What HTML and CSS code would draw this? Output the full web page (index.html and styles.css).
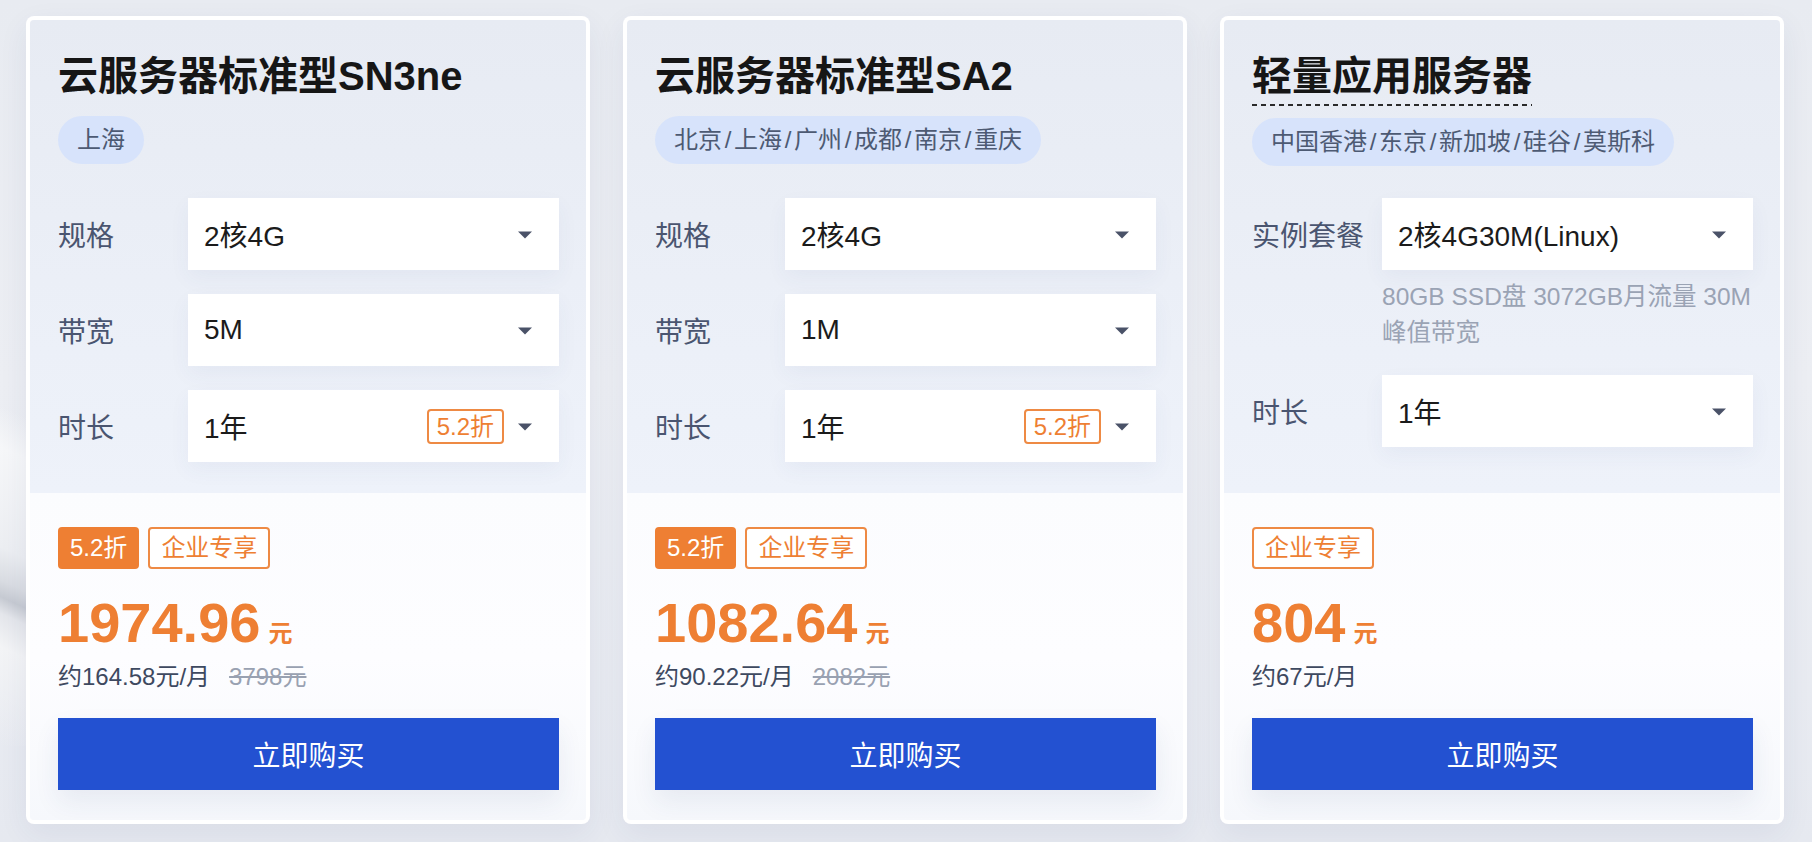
FILE: index.html
```html
<!DOCTYPE html>
<html lang="zh-CN">
<head>
<meta charset="utf-8">
<title>云服务器</title>
<link rel="stylesheet" href="styles.css">
</head>
<body>
<div class="cards">
  <div class="card">
    <div class="card-top">
      <h2 class="title">云服务器标准型SN3ne</h2>
      <div><span class="pill">上海</span></div>
      <div class="rows">
        <div class="row">
          <div class="label">规格</div>
          <div class="select"><span class="val">2核4G</span><svg class="arrow" width="14" height="8" viewBox="0 0 14 8"><path d="M0 0.5H14L7 7.5Z"/></svg></div>
        </div>
        <div class="row">
          <div class="label">带宽</div>
          <div class="select"><span class="val">5M</span><svg class="arrow" width="14" height="8" viewBox="0 0 14 8"><path d="M0 0.5H14L7 7.5Z"/></svg></div>
        </div>
        <div class="row">
          <div class="label">时长</div>
          <div class="select"><span class="val">1年</span><span class="sel-tag">5.2折</span><svg class="arrow" width="14" height="8" viewBox="0 0 14 8"><path d="M0 0.5H14L7 7.5Z"/></svg></div>
        </div>
      </div>
    </div>
    <div class="card-bottom">
      <div class="badges"><span class="badge fill">5.2折</span><span class="badge line">企业专享</span></div>
      <div class="price"><span class="num">1974.96</span><span class="unit">元</span></div>
      <div class="sub">约164.58元/月<span class="orig">3798元</span></div>
      <button class="buy">立即购买</button>
    </div>
  </div>

  <div class="card">
    <div class="card-top">
      <h2 class="title">云服务器标准型SA2</h2>
      <div><span class="pill">北京<span class="sep">/</span>上海<span class="sep">/</span>广州<span class="sep">/</span>成都<span class="sep">/</span>南京<span class="sep">/</span>重庆</span></div>
      <div class="rows">
        <div class="row">
          <div class="label">规格</div>
          <div class="select"><span class="val">2核4G</span><svg class="arrow" width="14" height="8" viewBox="0 0 14 8"><path d="M0 0.5H14L7 7.5Z"/></svg></div>
        </div>
        <div class="row">
          <div class="label">带宽</div>
          <div class="select"><span class="val">1M</span><svg class="arrow" width="14" height="8" viewBox="0 0 14 8"><path d="M0 0.5H14L7 7.5Z"/></svg></div>
        </div>
        <div class="row">
          <div class="label">时长</div>
          <div class="select"><span class="val">1年</span><span class="sel-tag">5.2折</span><svg class="arrow" width="14" height="8" viewBox="0 0 14 8"><path d="M0 0.5H14L7 7.5Z"/></svg></div>
        </div>
      </div>
    </div>
    <div class="card-bottom">
      <div class="badges"><span class="badge fill">5.2折</span><span class="badge line">企业专享</span></div>
      <div class="price"><span class="num">1082.64</span><span class="unit">元</span></div>
      <div class="sub">约90.22元/月<span class="orig">2082元</span></div>
      <button class="buy">立即购买</button>
    </div>
  </div>

  <div class="card">
    <div class="card-top lite">
      <h2 class="title dashed">轻量应用服务器</h2>
      <div><span class="pill">中国香港<span class="sep">/</span>东京<span class="sep">/</span>新加坡<span class="sep">/</span>硅谷<span class="sep">/</span>莫斯科</span></div>
      <div class="rows">
        <div class="row">
          <div class="label">实例套餐</div>
          <div class="select"><span class="val">2核4G30M(Linux)</span><svg class="arrow" width="14" height="8" viewBox="0 0 14 8"><path d="M0 0.5H14L7 7.5Z"/></svg></div>
          <div class="desc">80GB SSD盘 3072GB月流量 30M 峰值带宽</div>
        </div>
        <div class="row">
          <div class="label">时长</div>
          <div class="select"><span class="val">1年</span><svg class="arrow" width="14" height="8" viewBox="0 0 14 8"><path d="M0 0.5H14L7 7.5Z"/></svg></div>
        </div>
      </div>
    </div>
    <div class="card-bottom">
      <div class="badges"><span class="badge line">企业专享</span></div>
      <div class="price"><span class="num">804</span><span class="unit">元</span></div>
      <div class="sub">约67元/月</div>
      <button class="buy">立即购买</button>
    </div>
  </div>
</div>
</body>
</html>
```

FILE: styles.css
```css
* { box-sizing: border-box; }

html, body { height: 100%; }

body {
  margin: 0;
  padding: 16px 19px 0 26px;
  font-family: "Liberation Sans", "Noto Sans CJK SC", sans-serif;
  color: #1a1a1a;
  background: linear-gradient(180deg, #e8ebf1 0%, #eceef3 45%, #e6e9f0 100%);
  overflow: hidden;
}

.cards {
  display: grid;
  grid-template-columns: repeat(3, 564px);
  column-gap: 33px;
  position: relative;
}

.cards::before {
  content: "";
  position: absolute;
  left: -26px;
  top: 330px;
  width: 34px;
  height: 400px;
  background:
    linear-gradient(205deg, rgba(255,255,255,0) 0 18%, #f6f7f9 28%, #eceef2 52%, #d9dce2 60%, #c6cad2 64%, #e4e6eb 68%, #f3f4f6 76%, rgba(236,238,243,0) 100%);
  border-radius: 0 34px 0 0;
  z-index: 0;
}

.card {
  position: relative;
  z-index: 1;
  display: flex;
  flex-direction: column;
  border: 4px solid rgba(255,255,255,0.95);
  border-radius: 8px;
  background: #fbfcfe;
  box-shadow: 0 10px 30px rgba(40, 60, 110, 0.07);
  overflow: hidden;
}

.card-top {
  flex: 1;
  padding: 28px 27px 31px 28px;
  background: linear-gradient(180deg, #e7ebf3 0%, #ebeff7 55%, #eef2fa 100%);
}

.title {
  margin: 0;
  font-size: 40px;
  line-height: 56px;
  font-weight: 700;
  color: #161616;
}

.title.dashed {
  display: inline-block;
  background-image: repeating-linear-gradient(90deg, #2a2a2a 0 5px, rgba(0,0,0,0) 5px 9px);
  background-size: 100% 2px;
  background-repeat: no-repeat;
  background-position: 0 100%;
  padding-bottom: 2px;
}

.pill {
  display: inline-block;
  margin-top: 12px;
  height: 48px;
  line-height: 48px;
  padding: 0 19px;
  border-radius: 24px;
  background: #d7e3fb;
  color: #4d5a73;
  font-size: 24px;
  white-space: nowrap;
}

.sep {
  display: inline-block;
  width: 12px;
  text-align: center;
}

.rows {
  margin-top: 34px;
  display: flex;
  flex-direction: column;
  gap: 24px;
}

.lite .rows { margin-top: 32px; }

.row {
  display: grid;
  grid-template-columns: 130px 1fr;
  align-items: center;
}

.label {
  font-size: 28px;
  color: #4a5570;
  white-space: nowrap;
}

.select {
  height: 72px;
  background: #fff;
  display: flex;
  align-items: center;
  padding: 0 27px 0 16px;
  font-size: 28px;
  color: #1b1b1b;
  box-shadow: 0 8px 20px rgba(50, 70, 130, 0.05);
}

.val { flex: 1; }

.sel-tag {
  height: 35px;
  line-height: 31px;
  padding: 0 8px;
  border: 2px solid #ee8a44;
  border-radius: 4px;
  font-size: 24px;
  color: #ee7f33;
  margin-right: 14px;
}

.arrow { fill: #4a5268; display: block; margin-top: 2px; }

.desc {
  grid-column: 2;
  margin-top: 9px;
  font-size: 24.5px;
  line-height: 36px;
  color: #9aa3b4;
}

.card-bottom {
  padding: 34px 27px 30px 28px;
  background: linear-gradient(180deg, #fbfcfe 0%, #fdfdff 50%, #f6f8fc 100%);
}

.badges {
  display: flex;
  gap: 9px;
}

.badge {
  height: 42px;
  line-height: 42px;
  font-size: 24px;
  border-radius: 4px;
}

.badge.fill {
  background: #ee7f33;
  color: #fff;
  padding: 0 12px;
}

.badge.line {
  border: 2px solid #ee8a44;
  line-height: 38px;
  color: #ee7f33;
  padding: 0 11px;
  background: #fff;
}

.price {
  margin-top: 22px;
  height: 64px;
  font-size: 56px;
  line-height: 64px;
  color: #ee7f33;
  white-space: nowrap;
}

.num {
  font-weight: 700;
}

.unit {
  font-size: 24px;
  line-height: 1;
  font-weight: 700;
  margin-left: 8px;
}

.sub {
  margin-top: 6px;
  height: 32px;
  font-size: 24px;
  line-height: 32px;
  color: #3e4960;
  white-space: nowrap;
}

.orig {
  margin-left: 19px;
  color: #99a1b1;
  text-decoration: line-through;
}

.buy {
  display: block;
  width: 100%;
  margin-top: 25px;
  height: 72px;
  border: 0;
  border-radius: 0;
  background: #2351d1;
  color: #fff;
  font-family: "Liberation Sans", "Noto Sans CJK SC", sans-serif;
  font-size: 28px;
  box-shadow: 0 12px 26px rgba(40, 60, 120, 0.08);
  cursor: pointer;
}
```
